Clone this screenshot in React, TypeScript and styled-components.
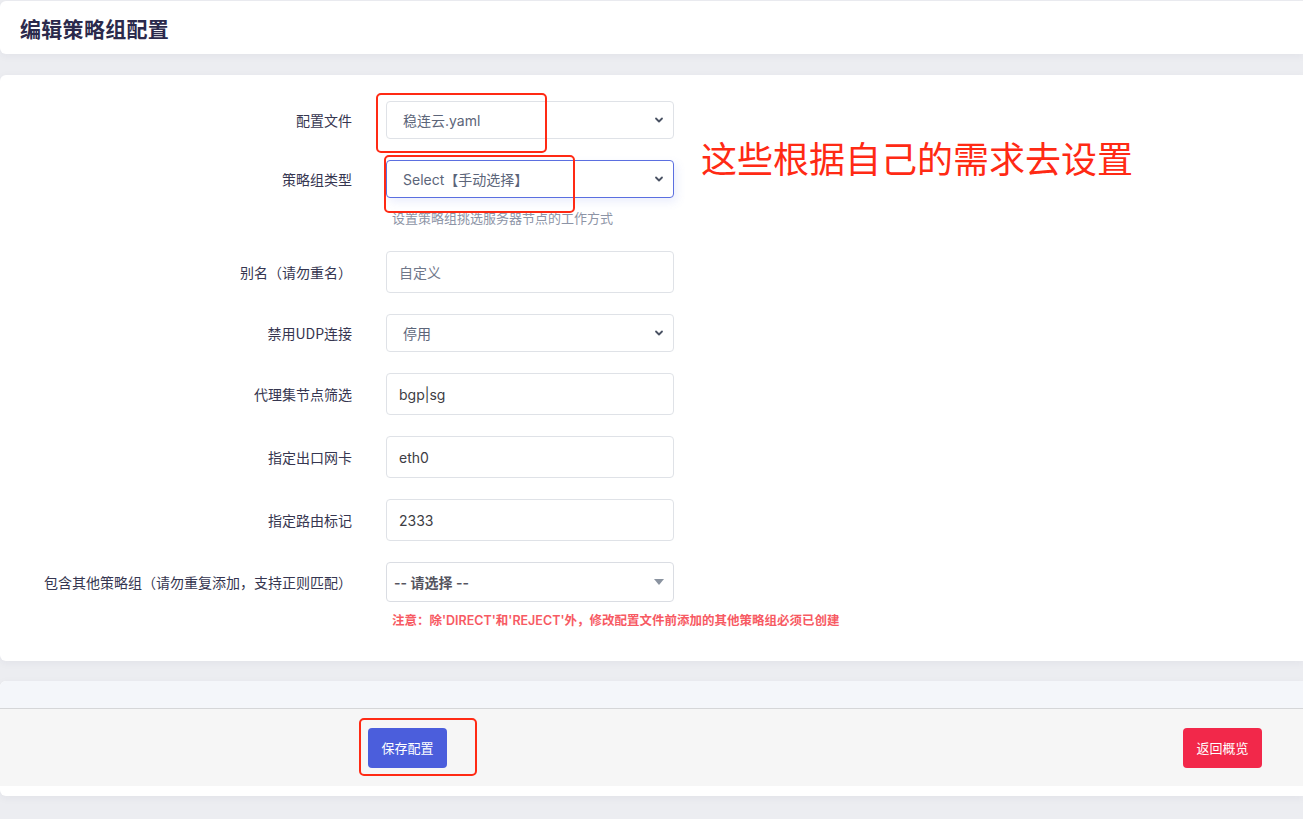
import styled, { createGlobalStyle } from 'styled-components';

const GlobalStyle = createGlobalStyle`
  html, body {
    margin: 0;
    padding: 0;
    background: #ecedf1;
    overflow: hidden;
  }
  body {
    font-family: Inter, "Noto Sans CJK SC", sans-serif;
    -webkit-font-smoothing: antialiased;
  }
  * { box-sizing: border-box; }
`;

const Page = styled.div`
  padding-top: 1px;
  width: 100%;
  min-height: 819px;
`;

const Card = styled.div`
  background: #fff;
  border-radius: 6px 0 0 6px;
  box-shadow: 0 2px 8px rgba(40, 45, 70, 0.05);
  position: relative;
`;

const HeaderCard = styled(Card)`
  height: 53px;
  display: flex;
  align-items: center;
  padding-left: 20px;
  margin-bottom: 21px;
`;

const Title = styled.h2`
  margin: 0;
  font-family: "Noto Sans CJK SC", sans-serif;
  font-size: 21px;
  font-weight: 700;
  color: #2b2a4c;
  letter-spacing: 0.3px;
`;

const FormCard = styled(Card)`
  padding: 26px 0 31px;
  margin-bottom: 20px;
`;

const FormList = styled.div`
  display: flex;
  flex-direction: column;
  gap: 21px;
`;

const Row = styled.div`
  display: grid;
  grid-template-columns: 352px 288px;
  column-gap: 34px;
  align-items: start;
`;

const Label = styled.div<{ $h: number }>`
  height: ${p => p.$h}px;
  display: flex;
  align-items: center;
  justify-content: flex-end;
  font-family: "Noto Sans CJK SC", sans-serif;
  font-size: 14px;
  color: #363650;
  white-space: nowrap;
`;

const Field = styled.div`
  position: relative;
  display: flex;
  flex-direction: column;
`;

const SelectBox = styled.div<{ $focus?: boolean }>`
  height: 38px;
  border: 1px solid ${p => (p.$focus ? '#5b6fe0' : '#dfe2e7')};
  border-radius: 4px;
  box-shadow: ${p => (p.$focus ? '3px 4px 10px rgba(94, 114, 228, 0.12)' : 'none')};
  display: flex;
  align-items: center;
  justify-content: space-between;
  padding: 0 8px 0 16px;
  font-size: 14px;
  color: #5c6579;
  background: #fff;
`;

const TextInput = styled.input`
  height: 42px;
  border: 1px solid #dfe2e7;
  border-radius: 4px;
  padding: 0 12px;
  font-family: Inter, "Noto Sans CJK SC", sans-serif;
  font-size: 14px;
  color: #3d3d44;
  outline: none;
  &::placeholder {
    color: #6f7789;
  }
`;

const MultiBox = styled.div`
  height: 40px;
  border: 1px solid #dadde3;
  border-radius: 4px;
  display: flex;
  align-items: center;
  justify-content: space-between;
  padding: 0 9px 0 7px;
  font-size: 14px;
  font-weight: 600;
  color: #55555f;
`;

const Caret = styled.span`
  width: 0;
  height: 0;
  border-left: 5px solid transparent;
  border-right: 5px solid transparent;
  border-top: 6px solid #8a93a0;
`;

const HelpText = styled.div`
  margin: 11px 0 3px 6px;
  line-height: 18px;
  font-size: 13px;
  color: #8d94a6;
  white-space: nowrap;
`;

const NoteText = styled.div`
  margin: 10px 0 0 6px;
  line-height: 18px;
  font-size: 12.5px;
  font-weight: 600;
  color: #f75a63;
  white-space: nowrap;
`;

const MarkBox = styled.div<{ $l: number; $t: number; $w: number; $h: number }>`
  position: absolute;
  left: ${p => p.$l}px;
  top: ${p => p.$t}px;
  width: ${p => p.$w}px;
  height: ${p => p.$h}px;
  border: 2px solid #ff2a14;
  border-radius: 5px;
  pointer-events: none;
`;

const Annotation = styled.div`
  position: absolute;
  left: 701px;
  top: 60px;
  font-size: 36px;
  line-height: 44px;
  color: #ff2a14;
  font-family: "Noto Sans CJK SC", sans-serif;
  white-space: nowrap;
`;

const FooterCard = styled(Card)`
  padding-bottom: 10px;
  overflow: hidden;
`;

const FooterTop = styled.div`
  height: 28px;
  background: #f4f6fa;
  border-bottom: 1px solid #d5d6d8;
`;

const FooterBar = styled.div`
  height: 77px;
  background: #f6f6f6;
  display: flex;
  align-items: center;
  justify-content: space-between;
  padding: 0 41px 0 368px;
`;

const BtnWrap = styled.div`
  position: relative;
`;

const Button = styled.button<{ $variant: 'primary' | 'danger' }>`
  width: 79px;
  height: 40px;
  border: none;
  border-radius: 4px;
  background: ${p => (p.$variant === 'primary' ? '#4b5edc' : '#f2284a')};
  color: #fff;
  font-family: "Noto Sans CJK SC", sans-serif;
  font-size: 13px;
  cursor: pointer;
`;

const Chevron = () => (
  <svg width="12" height="12" viewBox="0 0 12 12" fill="none">
    <path d="M3 4.5 L6 7.5 L9 4.5" stroke="#4a5263" strokeWidth="1.8" strokeLinecap="round" strokeLinejoin="round" />
  </svg>
);

const App = () => {
  return (
    <Page>
      <GlobalStyle />
      <HeaderCard>
        <Title>编辑策略组配置</Title>
      </HeaderCard>

      <FormCard>
        <Annotation>这些根据自己的需求去设置</Annotation>
        <FormList>
          <Row>
            <Label $h={38}>配置文件</Label>
            <Field>
              <SelectBox>
                <span>稳连云.yaml</span>
                <Chevron />
              </SelectBox>
              <MarkBox $l={-10} $t={-8} $w={171} $h={60} />
            </Field>
          </Row>
          <Row>
            <Label $h={38}>策略组类型</Label>
            <Field>
              <SelectBox $focus>
                <span>Select【手动选择】</span>
                <Chevron />
              </SelectBox>
              <HelpText>设置策略组挑选服务器节点的工作方式</HelpText>
              <MarkBox $l={-2} $t={-5} $w={191} $h={58} />
            </Field>
          </Row>
          <Row>
            <Label $h={42}>别名（请勿重名）</Label>
            <Field>
              <TextInput placeholder="自定义" />
            </Field>
          </Row>
          <Row>
            <Label $h={38}>禁用UDP连接</Label>
            <Field>
              <SelectBox>
                <span>停用</span>
                <Chevron />
              </SelectBox>
            </Field>
          </Row>
          <Row>
            <Label $h={42}>代理集节点筛选</Label>
            <Field>
              <TextInput defaultValue="bgp|sg" />
            </Field>
          </Row>
          <Row>
            <Label $h={42}>指定出口网卡</Label>
            <Field>
              <TextInput defaultValue="eth0" />
            </Field>
          </Row>
          <Row>
            <Label $h={42}>指定路由标记</Label>
            <Field>
              <TextInput defaultValue="2333" />
            </Field>
          </Row>
          <Row>
            <Label $h={40}>包含其他策略组（请勿重复添加，支持正则匹配）</Label>
            <Field>
              <MultiBox>
                <span>-- 请选择 --</span>
                <Caret />
              </MultiBox>
              <NoteText>注意：除'DIRECT'和'REJECT'外，修改配置文件前添加的其他策略组必须已创建</NoteText>
            </Field>
          </Row>
        </FormList>
      </FormCard>

      <FooterCard>
        <FooterTop />
        <FooterBar>
          <BtnWrap>
            <Button $variant="primary">保存配置</Button>
            <MarkBox $l={-9} $t={-10} $w={118} $h={58} />
          </BtnWrap>
          <Button $variant="danger">返回概览</Button>
        </FooterBar>
      </FooterCard>
    </Page>
  );
};

export default App;
